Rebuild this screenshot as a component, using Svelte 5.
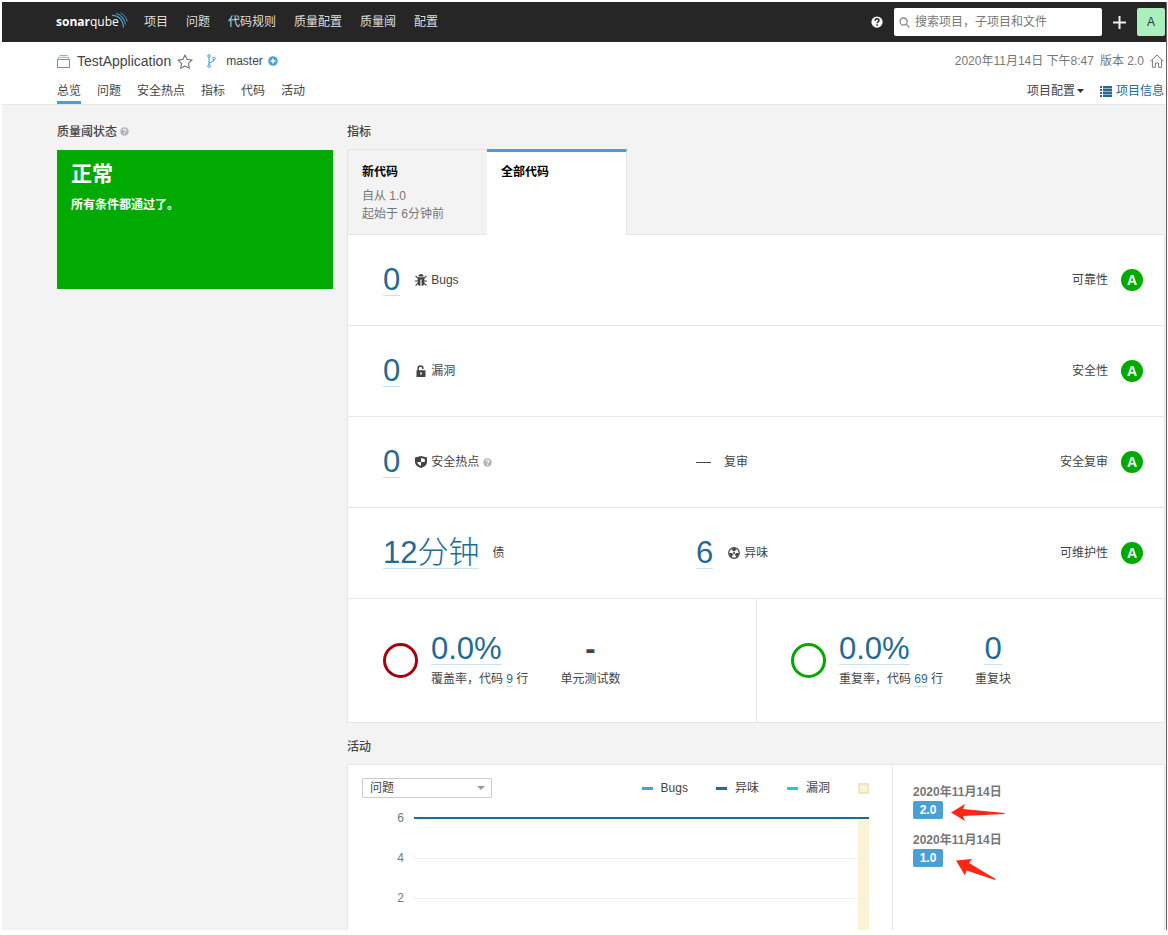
<script>
  const globalNav = ['项目', '问题', '代码规则', '质量配置', '质量阈', '配置'];
  const projectNav = ['总览', '问题', '安全热点', '指标', '代码', '活动'];
  const legend = [
    { name: 'Bugs', color: '#4b9fd5' },
    { name: '异味', color: '#236a97' },
    { name: '漏洞', color: '#24c6e0' }
  ];
</script>

{#snippet help(size, color, mark)}
  <svg width={size} height={size} viewBox="0 0 16 16" aria-hidden="true">
    <circle cx="8" cy="8" r="7.5" fill={color} />
    <path d="M5.6 6.2c0-3.4 5-3.3 5-.3 0 1.9-2.4 1.7-2.4 3.8" fill="none" stroke={mark} stroke-width="2" />
    <path d="M7.1 11h2.1v2H7.1z" fill={mark} />
  </svg>
{/snippet}

<div class="page">
  <header class="global">
    <a class="logo" href="#home" aria-label="sonarqube">
      <span><b>sonar</b>qube</span>
      <svg width="16" height="16" viewBox="0 0 16 16" fill="none" stroke="#4b9fd5" aria-hidden="true">
        <path d="M0 3.500C6 3 11 7.500 11.500 15.500" stroke-width="1.300" />
        <path d="M4 1.500C9 2.500 13 7 13.500 12.500" stroke-width="1.100" />
        <path d="M8.500 .8C12 2.500 14.500 5.500 15.300 9.500" stroke-width=".9" />
      </svg>
    </a>
    <nav class="main-nav">
      {#each globalNav as item}<a href="#nav">{item}</a>{/each}
    </nav>
    <button class="plain" aria-label="帮助">{@render help(12, '#fff', '#262626')}</button>
    <label class="search">
      <svg width="11" height="11" viewBox="0 0 12 12" fill="none" stroke="#888" stroke-width="1.4" aria-hidden="true">
        <circle cx="5" cy="5" r="3.9" /><path d="M8 8l3.300 3.300" />
      </svg>
      <input type="search" placeholder="搜索项目，子项目和文件" aria-label="搜索" />
    </label>
    <button class="plain plus" aria-label="新建">
      <svg width="13" height="13" viewBox="0 0 13 13" aria-hidden="true"><path d="M6.500 0v13M0 6.500h13" stroke="#eee" stroke-width="2" /></svg>
    </button>
    <button class="avatar">A</button>
  </header>

  <div class="context">
    <div class="crumbs">
      <svg width="13" height="13" viewBox="0 0 13 13" fill="none" stroke="#4b9fd5" aria-hidden="true">
        <path d="M2.500 .5h8M1.500 3.800V2.300h10v1.500" opacity=".75" /><path d="M.5 4.500h12v8H.5z" />
      </svg>
      <a class="project" href="#project">TestApplication</a>
      <svg width="16" height="15" viewBox="0 0 16 15" fill="none" stroke="#777" stroke-width="1.1" aria-hidden="true">
        <path d="M8 .9l2.100 4.500 5 .6-3.700 3.400 1 4.900L8 11.900l-4.400 2.400 1-4.900L.9 6l5-.6z" stroke-linejoin="round" />
      </svg>
      <svg class="branch" width="9" height="14" viewBox="0 0 9 14" fill="none" stroke="#4b9fd5" aria-hidden="true">
        <circle cx="2" cy="2" r="1.300" /><circle cx="2" cy="12" r="1.300" /><circle cx="7" cy="4.500" r="1.300" />
        <path d="M2 3.300v7.400M7 5.800C7 8.500 2 7.500 2 10.200" stroke-width="1.100" />
      </svg>
      <span class="master">master</span>
      <svg width="10" height="10" viewBox="0 0 10 10" aria-hidden="true">
        <circle cx="5" cy="5" r="4.800" fill="#4b9fd5" /><path d="M5 2.500v5M2.500 5h5" stroke="#fff" stroke-width="1.500" />
      </svg>
      <div class="meta">
        <span>2020年11月14日 下午8:47</span><span>版本 2.0</span>
        <svg width="14" height="14" viewBox="0 0 14 14" fill="none" stroke="#777" aria-hidden="true">
          <path d="M.5 7.300L7 1l6.500 6.300M2.400 6v7.300h3V9h3.200v4.300h3V6" stroke-linejoin="round" />
        </svg>
      </div>
    </div>
    <div class="tabs">
      <nav>
        {#each projectNav as item, i}<a href="#tab" class:active={i === 0}>{item}</a>{/each}
      </nav>
      <div class="tools">
        <button class="plain">项目配置<svg width="7" height="4" viewBox="0 0 7 4" aria-hidden="true"><path d="M0 0h7L3.500 4z" fill="#333" /></svg></button>
        <a href="#info"><svg width="12" height="11" viewBox="0 0 12 11" fill="#236a97" aria-hidden="true">
          <path d="M0 0h2v2H0zM3 0h9v2H3zM0 3h2v2H0zM3 3h9v2H3zM0 6h2v2H0zM3 6h9v2H3zM0 9h2v2H0zM3 9h9v2H3z" />
          <path d="M3 2h9v1H3zM3 5h9v1H3zM3 8h9v1H3z" opacity=".5" />
        </svg>项目信息</a>
      </div>
    </div>
  </div>

  <main>
    <section class="gate">
      <h2>质量阈状态 {@render help(9, '#b4b4b4', '#f3f3f3')}</h2>
      <div class="status">
        <strong>正常</strong>
        <p>所有条件都通过了。</p>
      </div>
    </section>

    <div class="content">
      <h2>指标</h2>
      <div class="periods">
        <button><b>新代码</b><span>自从 1.0</span><span>起始于 6分钟前</span></button>
        <button class="selected"><b>全部代码</b></button>
      </div>
      <div class="measures">
        <div class="row">
          <div class="cell">
            <a class="num" href="#bugs">0</a>
            <svg class="kind" width="12" height="12" viewBox="0 0 12 12" aria-hidden="true">
              <path d="M3.400 2.600a2.600 2.600 0 0 1 5.200 0zM2.700 3.300h6.600v7L8 11.700H6.600V5.500H5.400v6.200H4L2.700 10.300z" fill="#444" />
              <path d="M.6 1.800L3 4.300M11.400 1.800L9 4.300M0 7h3M9 7h3M.6 11.600L3 9.200M11.400 11.600L9 9.200" stroke="#444" stroke-width="1.200" />
            </svg>Bugs
          </div>
          <div class="rating">可靠性<b>A</b></div>
        </div>
        <div class="row">
          <div class="cell">
            <a class="num" href="#vulnerabilities">0</a>
            <svg class="kind" width="12" height="12" viewBox="0 0 12 12" aria-hidden="true">
              <path d="M3.100 6V3.300a2.300 2.300 0 0 1 4.800 0V4" fill="none" stroke="#444" stroke-width="1.500" />
              <path d="M1.500 5.300h9V12h-9zM5.200 7.500v2h1.600v-2z" fill="#444" fill-rule="evenodd" />
            </svg>漏洞
          </div>
          <div class="rating">安全性<b>A</b></div>
        </div>
        <div class="row">
          <div class="cell">
            <a class="num" href="#hotspots">0</a>
            <svg class="kind" width="12" height="12" viewBox="0 0 12 12" aria-hidden="true">
              <path d="M6 0l6 1.500V6c0 3-2.700 5-6 6C2.700 11 0 9 0 6V1.500z" fill="#444" />
              <path d="M6 2v4h3.800V3zM6 6v4C4 9.200 2.400 7.800 2.200 6z" fill="#fff" />
            </svg>安全热点<span class="hint">{@render help(9, '#b4b4b4', '#fff')}</span>
          </div>
          <div class="cell"><span class="dash"></span>复审</div>
          <div class="rating">安全复审<b>A</b></div>
        </div>
        <div class="row">
          <div class="cell"><a class="num debt" href="#debt">12分钟</a>债</div>
          <div class="cell">
            <a class="num" href="#smells">6</a>
            <svg class="kind" width="12" height="12" viewBox="0 0 12 12" aria-hidden="true">
              <circle cx="6" cy="6" r="5.300" fill="#fff" stroke="#444" stroke-width="1.200" />
              <path d="M6 6L3.600 1.800a4.800 4.800 0 0 1 4.800 0zM6 6l4.800 0a4.800 4.800 0 0 1-2.400 4.200zM6 6l-2.400 4.200A4.800 4.800 0 0 1 1.200 6z" fill="#444" />
              <circle cx="6" cy="6" r="1.500" fill="#444" stroke="#fff" stroke-width=".8" />
            </svg>异味
          </div>
          <div class="rating">可维护性<b>A</b></div>
        </div>
        <div class="pair">
          <div class="half">
            <span class="ring red"></span>
            <div class="stat"><a class="num" href="#coverage">0.0%</a><p>覆盖率，代码 <a href="#lines">9</a> 行</p></div>
            <div class="stat center"><span class="none">-</span><p>单元测试数</p></div>
          </div>
          <div class="half">
            <span class="ring"></span>
            <div class="stat"><a class="num" href="#duplications">0.0%</a><p>重复率，代码 <a href="#lines">69</a> 行</p></div>
            <div class="stat center"><a class="num" href="#blocks">0</a><p>重复块</p></div>
          </div>
        </div>
      </div>

      <h2 class="second">活动</h2>
      <div class="activity">
        <div class="graph">
          <div class="graph-head">
            <div class="select">
              <select aria-label="图表"><option>问题</option></select>
              <svg width="8" height="4" viewBox="0 0 8 4" aria-hidden="true"><path d="M0 0h8L4 4z" fill="#999" /></svg>
            </div>
            <ul>
              {#each legend as l}<li><i style="background: {l.color}"></i>{l.name}</li>{/each}
              <li class="leak" aria-label="新代码"></li>
            </ul>
          </div>
          <div class="chart">
            <div class="tick"><span>6</span><hr class="series" /></div>
            <div class="tick"><span>4</span><hr /></div>
            <div class="tick"><span>2</span><hr /></div>
            <div class="period"></div>
          </div>
        </div>
        <div class="events">
          <div class="event"><time>2020年11月14日</time><b>2.0</b>
            <svg class="arrow" width="54" height="18" viewBox="0 0 54 18" aria-hidden="true"><path d="M0 8.500L14 0l-2 5L53.500 9v1L12 12l2 5z" fill="#ff2712" /></svg>
          </div>
          <div class="event"><time>2020年11月14日</time><b>1.0</b>
            <svg class="arrow last" width="40" height="22" viewBox="0 0 40 22" aria-hidden="true"><path d="M0 1.500L16 0l-3 4 26.500 16-.5 1L10.500 11.500l-1.500 5z" fill="#ff2712" /></svg>
          </div>
        </div>
      </div>
    </div>
  </main>
</div>

<style>
  :global(body) { margin: 0; background: #fff; }
  .page, .page :global(*) { box-sizing: border-box; }
  .page {
    font: 12px/18px "Liberation Sans", "Noto Sans CJK SC", sans-serif;
    color: #444;
    margin: 2px 1px 5px 2px;
    height: calc(100vh - 7px);
    overflow: hidden;
    display: flex;
    flex-direction: column;
    background: #f3f3f3;
    border-right: 1px solid #666;
  }
  a { color: inherit; text-decoration: none; }
  button { font: inherit; color: inherit; cursor: pointer; }
  svg { flex: none; }
  .plain { background: none; border: 0; padding: 0; display: flex; align-items: center; }
  .global { flex: none; height: 40px; background: #262626; display: flex; align-items: center; padding-left: 54px; color: #ddd; }
  .logo { display: flex; align-items: center; color: #fff; font: 12px/18px "Open Sans", sans-serif; width: 73px; }
  .logo span { flex: none; width: 60px; }
  .logo svg { margin: -5px 0 0 -4px; }
  .main-nav { display: flex; gap: 18px; margin-left: 15px; margin-right: auto; }
  .search { display: flex; align-items: center; gap: 5px; width: 208px; height: 28px; margin-left: 11px; padding: 0 5px; background: #fff; border-radius: 2px; }
  .search input { flex: 1; min-width: 0; border: 0; padding: 0; background: none; outline: 0; font: inherit; color: #444; }
  .search input::placeholder { color: #777; }
  .plus { margin: 0 11px; }
  .avatar { width: 28px; height: 28px; margin-right: 1px; padding: 0; border: 0; border-radius: 2px; background: #aaefbc; color: #333; }
  .context { flex: none; background: #fff; border-bottom: 1px solid #e6e6e6; padding: 0 2px 0 55px; }
  .crumbs { display: flex; align-items: center; height: 38px; }
  .project { font-size: 14px; margin: 0 6px 0 7px; }
  .branch { margin: 0 10px 0 14px; }
  .master { margin-right: 5px; }
  .meta { display: flex; align-items: center; gap: 6px; margin-left: auto; color: #777; }
  .tabs { display: flex; justify-content: space-between; height: 24px; }
  .tabs nav { display: flex; gap: 16px; }
  .tabs nav a { border-bottom: 3px solid transparent; height: 24px; line-height: 22px; }
  .tabs nav a.active { border-color: #4b9fd5; }
  .tools { display: flex; gap: 16px; line-height: 22px; }
  .tools .plain { gap: 2px; height: 22px; }
  .tools a { display: flex; align-items: center; gap: 4px; height: 22px; color: #236a97; }
  main { display: flex; gap: 14px; padding: 18px 1px 0 55px; flex: 1; min-height: 0; }
  .gate { flex: 0 0 276px; }
  .content { flex: 1; min-width: 0; display: flex; flex-direction: column; }
  h2 { flex: none; margin: 0 0 8px; font-size: 12px; line-height: 18px; font-weight: 500; }
  .gate h2 { margin-bottom: 9px; }
  .status { height: 139px; background: #0a0; color: #fff; padding: 10px 14px; }
  .status strong { display: block; font-size: 21px; line-height: 28px; }
  .status p { margin: 8px 0 0; font-weight: 700; }
  .periods { flex: none; display: flex; }
  .periods button { width: 140px; height: 85px; padding: 13px 14px 0; border: 1px solid #e6e6e6; border-width: 1px 0 0 1px; background: none; text-align: left; display: flex; flex-direction: column; }
  .periods b { color: #000; margin-bottom: 6px; }
  .periods span { color: #777; }
  .periods .selected { background: #fff; border-width: 3px 1px 0 0; border-top-color: #4b9fd5; padding-top: 11px; margin-bottom: -1px; z-index: 1; height: 86px; }
  .measures { flex: none; background: #fff; border: 1px solid #e6e6e6; }
  .row { height: 91px; border-bottom: 1px solid #e6e6e6; display: flex; align-items: center; padding: 0 21px 0 35px; }
  .cell { display: flex; align-items: center; flex: 0 0 calc(50% - 67px); }
  .num { font-size: 31px; line-height: 31px; color: #236a97; border-bottom: 1px solid #cae3f2; }
  .cell .kind { margin: 0 4px 0 15px; }
  .debt { margin-right: 13px; font-weight: 300; }
  .hint { display: flex; margin-left: 4px; }
  .dash { width: 15px; height: 1px; background: #444; margin-right: 13px; }
  .rating { margin-left: auto; display: flex; align-items: center; gap: 13px; }
  .rating b { width: 22px; height: 22px; border-radius: 50%; background: #0a0; color: #fff; text-align: center; font-size: 14px; line-height: 22px; }
  .pair { display: flex; height: 123px; }
  .half { flex: 1; display: flex; align-items: center; padding-left: 35px; }
  .half + .half { border-left: 1px solid #e6e6e6; padding-left: 34px; }
  .ring { width: 35px; height: 35px; border: 3px solid #0a0; border-radius: 50%; margin-right: 13px; }
  .ring.red { border-color: #a4030f; }
  .stat { display: flex; flex-direction: column; align-items: flex-start; margin-right: 32px; }
  .stat p { margin: 5px 0 0; }
  .stat p a { color: #236a97; border-bottom: 1px solid #cae3f2; }
  .center { align-items: center; }
  .none { font-size: 31px; line-height: 32px; font-weight: 700; }
  .second { margin-top: 15px; }
  .activity { flex: 1; min-height: 0; display: grid; grid-template-columns: 2fr 1fr; background: #fff; border: 1px solid #e6e6e6; border-bottom: 0; }
  .graph { min-width: 0; padding: 13px 23px 0 14px; display: flex; flex-direction: column; }
  .graph-head { display: flex; justify-content: space-between; align-items: center; height: 20px; }
  .select { position: relative; display: flex; }
  .select svg { position: absolute; right: 7px; top: 8px; pointer-events: none; }
  select { appearance: none; width: 130px; height: 20px; padding: 0 7px; border: 1px solid #ccc; border-radius: 1px; font: inherit; color: #444; background: #fff; }
  ul { display: flex; align-items: center; margin: 0; padding: 0; list-style: none; gap: 28px; }
  li { display: flex; align-items: center; gap: 8px; }
  li i { width: 11px; height: 3px; }
  .leak { width: 11px; height: 11px; border: 2px solid #efe5c4; background: #fbf3d5; }
  .chart { flex: 1; position: relative; padding-top: 11px; }
  .tick { display: flex; align-items: center; height: 18px; margin-bottom: 22px; color: #777; }
  .tick span { width: 42px; text-align: right; margin-right: 10px; }
  .tick hr { flex: 1; margin: 0; border: 0; height: 1px; background: #eee; z-index: 1; }
  .tick .series { height: 2px; background: #236a97; }
  .period { position: absolute; top: 20px; right: 0; bottom: 0; width: 11px; background: #fbf3d5; }
  .events { border-left: 1px solid #e6e6e6; padding: 18px 20px; }
  .event { position: relative; display: flex; flex-direction: column; align-items: flex-start; margin-bottom: 12px; color: #777; }
  .event time { font-weight: 700; }
  .event b { width: 30px; height: 18px; background: #4b9fd5; color: #fff; text-align: center; border-radius: 2px; }
  .arrow { position: absolute; left: 38px; top: 21px; }
  .arrow.last { left: 43px; top: 28px; }
</style>
